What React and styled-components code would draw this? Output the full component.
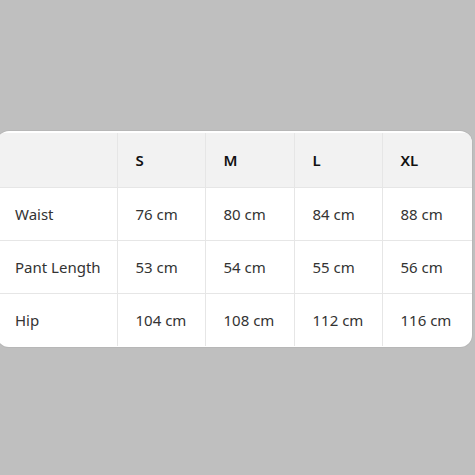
import styled, { createGlobalStyle } from 'styled-components';

const GlobalStyle = createGlobalStyle`
  html, body {
    margin: 0;
    padding: 0;
    background: #bfbfbf;
  }
  body {
    font-family: "Noto Sans", "Open Sans", sans-serif;
  }
`

const Page = styled.div`
  width: 475px;
  height: 475px;
  display: flex;
  align-items: center;
`

const Card = styled.div`
  margin-left: -3px;
  margin-top: 3px;
  width: 475px;
  padding: 2px 0 1px;
  background: #fff;
  border-radius: 12px;
  overflow: hidden;
  box-shadow: 0 0 0 1px rgba(0, 0, 0, 0.04);
`

const Table = styled.table`
  width: 100%;
  border-collapse: collapse;
  table-layout: fixed;
`

const HeadRow = styled.tr`
  background: #f2f2f2;
  height: 54px;
`

const Row = styled.tr`
  height: 53px;
  border-top: 1px solid #e6e6e6;
`

const Cell = styled.td`
  padding: 0 0 0 18px;
  font-size: 15px;
  color: #333;
  text-align: left;
  border-left: ${p => (p.$first ? 'none' : '1px solid #e6e6e6')};
`

const HeadCell = styled(Cell).attrs({ as: 'th' })`
  font-weight: 600;
  color: #111;
`

const sizes = ['S', 'M', 'L', 'XL'];
const widths = [120, 88, 89, 88, 90];

const rows = [
  { label: 'Waist', values: [76, 80, 84, 88] },
  { label: 'Pant Length', values: [53, 54, 55, 56] },
  { label: 'Hip', values: [104, 108, 112, 116] },
];

const App = () => {
  return (
    <Page>
      <GlobalStyle />
      <Card>
        <Table>
          <colgroup>
            {widths.map((w, i) => <col key={i} style={{ width: w }} />)}
          </colgroup>
          <thead>
            <HeadRow>
              <HeadCell $first></HeadCell>
              {sizes.map(s => (
                <HeadCell key={s}>{s}</HeadCell>
              ))}
            </HeadRow>
          </thead>
          <tbody>
            {rows.map(row => (
              <Row key={row.label}>
                <Cell $first>{row.label}</Cell>
                {row.values.map(v => (
                  <Cell key={v}>{v} cm</Cell>
                ))}
              </Row>
            ))}
          </tbody>
        </Table>
      </Card>
    </Page>
  )
}

export default App;
